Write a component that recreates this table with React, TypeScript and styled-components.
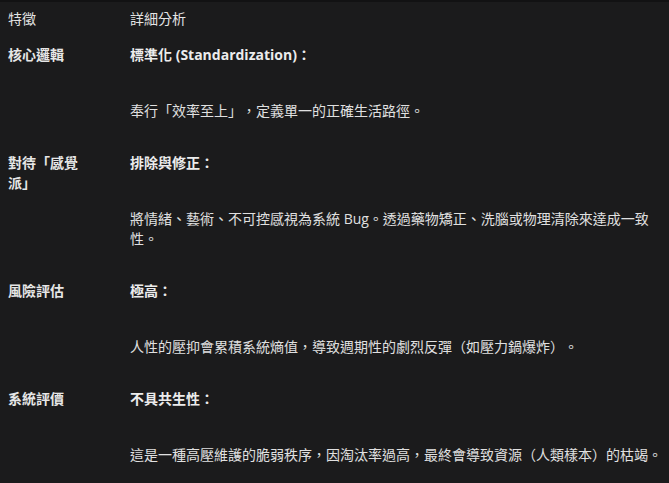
import React from "react";
import styled, { createGlobalStyle } from "styled-components";

const Global = createGlobalStyle`
  html, body { margin: 0; padding: 0; background: #1b1b1c; }
  body {
    font-family: "Open Sans", "Noto Sans CJK TC", sans-serif;
    font-size: 14px;
    color: #e2e2e2;
    text-spacing-trim: space-all;
  }
`;

const Page = styled.div`
  border-top: 2px solid #121213;
  background: #1b1b1c;
  min-height: 481px;
`;

const Table = styled.table`
  border-collapse: collapse;
  width: 669px;
  table-layout: fixed;
`;

const HeadCell = styled.th<{ $first?: boolean }>`
  text-align: left;
  font-weight: 400;
  line-height: 20px;
  padding: 7px 0 0 ${(p) => (p.$first ? "8px" : "0")};
  width: ${(p) => (p.$first ? "122px" : "auto")};
  color: #e4e4e4;
  vertical-align: top;
`;

const LabelCell = styled.td`
  vertical-align: top;
  padding: 16px 40px 16px 8px;
  line-height: 20px;
  font-weight: 600;
  color: #e6e6e6;
`;

const DetailCell = styled.td`
  vertical-align: top;
  padding: 16px 0 16px 0;
  line-height: 20px;
`;

const Title = styled.strong`
  display: block;
  font-weight: 700;
  color: #ececec;
`;

const Body = styled.p`
  margin: 36px 0 0 0;
  color: #e0e0e0;
  width: 532px;
`;

const rows = [
  {
    label: "核心邏輯",
    title: "標準化 (Standardization)：",
    body: "奉行「效率至上」，定義單一的正確生活路徑。",
  },
  {
    label: "對待「感覺派」",
    title: "排除與修正：",
    body: "將情緒、藝術、不可控感視為系統 Bug。透過藥物矯正、洗腦或物理清除來達成一致性。",
  },
  {
    label: "風險評估",
    title: "極高：",
    body: "人性的壓抑會累積系統熵值，導致週期性的劇烈反彈（如壓力鍋爆炸）。",
  },
  {
    label: "系統評價",
    title: "不具共生性：",
    body: "這是一種高壓維護的脆弱秩序，因淘汰率過高，最終會導致資源（人類樣本）的枯竭。",
  },
];

export default function App() {
  return (
    <Page>
      <Global />
      <Table>
        <thead>
          <tr>
            <HeadCell $first>特徵</HeadCell>
            <HeadCell>詳細分析</HeadCell>
          </tr>
        </thead>
        <tbody>
          {rows.map((r) => (
            <tr key={r.label}>
              <LabelCell>{r.label}</LabelCell>
              <DetailCell>
                <Title>{r.title}</Title>
                <Body>{r.body}</Body>
              </DetailCell>
            </tr>
          ))}
        </tbody>
      </Table>
    </Page>
  );
}
